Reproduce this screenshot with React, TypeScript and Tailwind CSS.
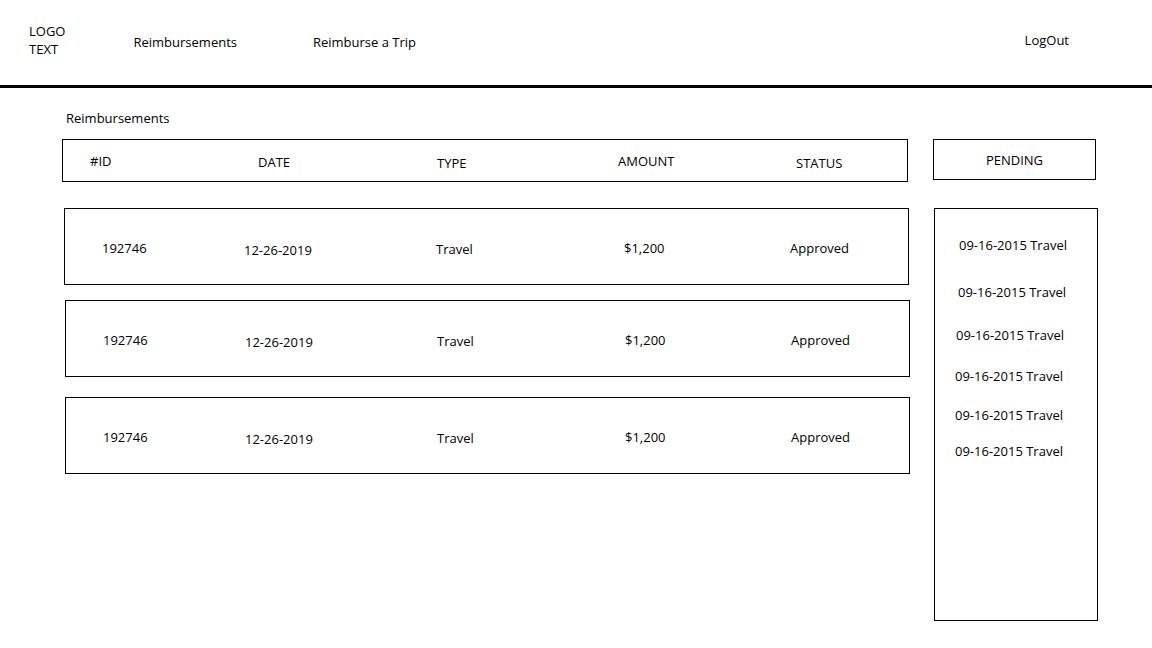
import React from "react";

const rows = [
  { id: "192746", date: "12-26-2019", type: "Travel", amount: "$1,200", status: "Approved" },
  { id: "192746", date: "12-26-2019", type: "Travel", amount: "$1,200", status: "Approved" },
  { id: "192746", date: "12-26-2019", type: "Travel", amount: "$1,200", status: "Approved" },
];

// wireframe is hand drawn, so each box sits a pixel or two off the others
const rowBoxClass = [
  "mt-[26px] ml-[2px] w-[845px]",
  "mt-[15px] ml-[3px] w-[845px]",
  "mt-[20px] ml-[3px] w-[845px]",
];

const pendingItemClass = [
  "mt-[27px] ml-[24px]",
  "mt-[29px] ml-[23px]",
  "mt-[25px] ml-[21px]",
  "mt-[23px] ml-[20px]",
  "mt-[21px] ml-[20px]",
  "mt-[18px] ml-[20px]",
];

export default function App() {
  return (
    <div className="min-h-[648px] w-[1152px] bg-white text-black font-['Open_Sans',sans-serif] text-[13px] leading-[18px]">
      {/* Top bar */}
      <div className="flex h-[85px] items-start">
        <div className="ml-[29px] mt-[22px]">
          <div>LOGO</div>
          <div>TEXT</div>
        </div>
        <div className="ml-[68px] mt-[33px]">Reimbursements</div>
        <div className="ml-[76px] mt-[33px]">Reimburse a Trip</div>
        <div className="ml-auto mr-[83px] mt-[31px]">LogOut</div>
      </div>
      <div className="h-[3px] w-full bg-black" />

      <div className="flex">
        {/* Left column */}
        <div className="ml-[62px] w-[847px]">
          <div className="ml-[4px] mt-[21px]">Reimbursements</div>

          <div className="mt-[12px] grid h-[43px] w-[846px] grid-cols-[168px_179px_181px_178px_1fr] items-center border border-black pl-[27px] pt-[2px]">
            <span className="pb-[2px]">#ID</span>
            <span>DATE</span>
            <span className="pt-[2px]">TYPE</span>
            <span className="pb-[2px]">AMOUNT</span>
            <span className="pt-[2px]">STATUS</span>
          </div>

          {rows.map((r, i) => (
            <div
              key={i}
              className={`${rowBoxClass[i]} grid h-[77px] grid-cols-[142px_192px_188px_166px_1fr] items-center border border-black pl-[37px] pt-[4px]`}
            >
              <span className="pb-[2px]">{r.id}</span>
              <span className="pt-[2px]">{r.date}</span>
              <span>{r.type}</span>
              <span className="pb-[2px]">{r.amount}</span>
              <span className="pb-[2px]">{r.status}</span>
            </div>
          ))}
        </div>

        {/* Right column */}
        <div className="ml-[24px] w-[165px]">
          <div className="mt-[51px] flex h-[41px] w-[163px] items-center justify-center border border-black">
            PENDING
          </div>
          <div className="ml-[1px] mt-[28px] flex h-[413px] w-[164px] flex-col border border-black">
            {pendingItemClass.map((c, i) => (
              <div key={i} className={c}>
                09-16-2015 Travel
              </div>
            ))}
          </div>
        </div>
      </div>
    </div>
  );
}
